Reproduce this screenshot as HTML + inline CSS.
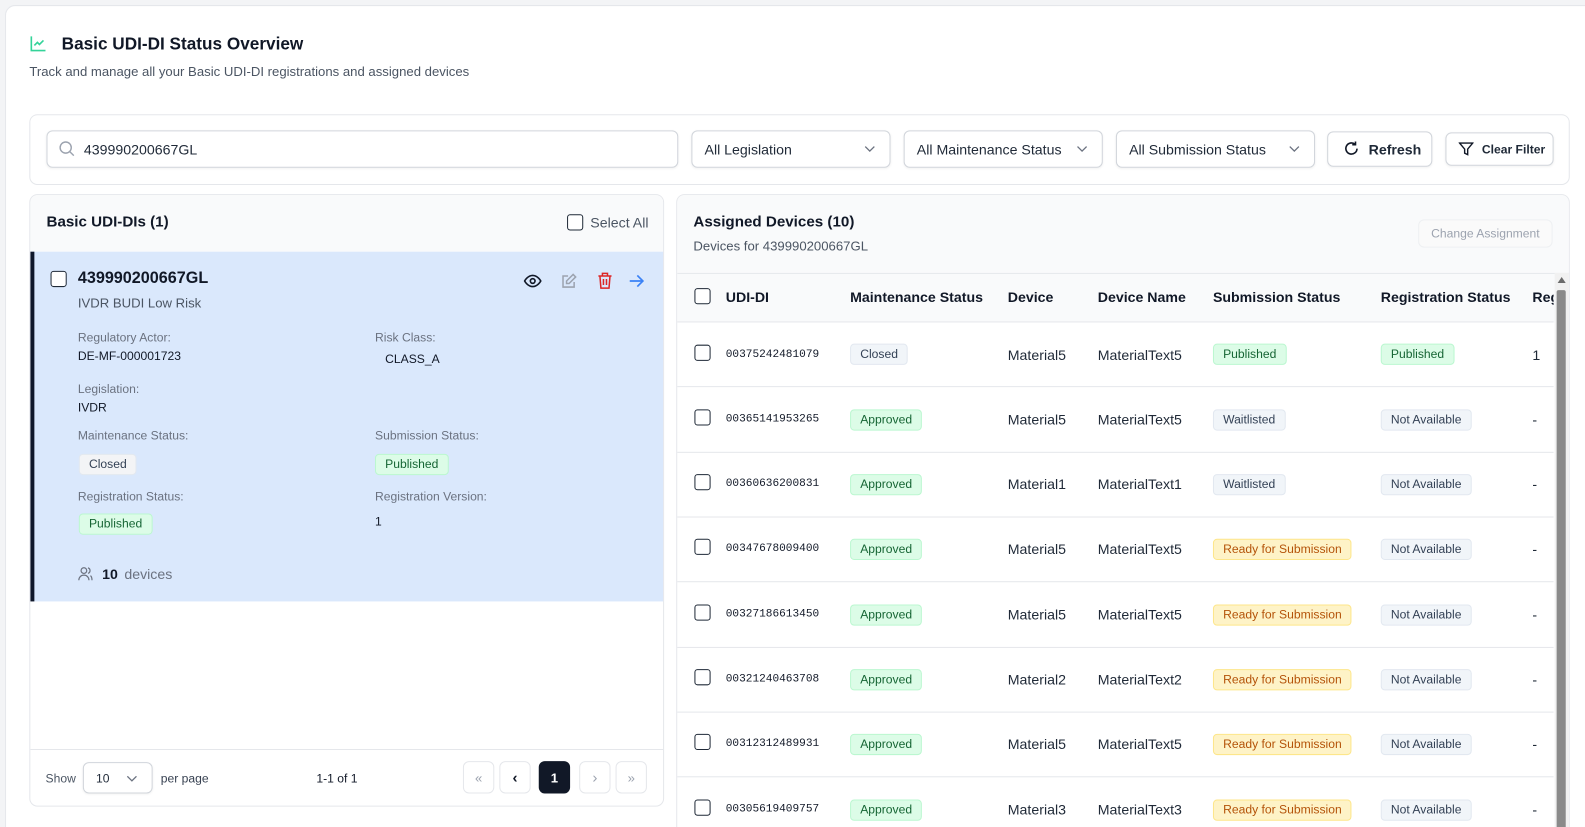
<!DOCTYPE html>
<html><head><meta charset="utf-8"><style>
*{box-sizing:border-box;margin:0;padding:0}
html,body{width:1585px;height:827px;overflow:hidden}
body{background:#f3f4f6;font-family:"Liberation Sans",sans-serif;color:#111827}
#clip{position:fixed;left:0;top:0;width:1585px;height:827px;overflow:hidden}
#w{position:absolute;left:0;top:0;width:1568px;height:818px;transform:scale(1.0108);transform-origin:0 0}
.a{position:absolute}
.card{position:absolute;left:5px;top:5px;width:1590px;height:840px;background:#fff;border-radius:10px;border:1px solid #e5e7eb}
.box{position:absolute;border:1px solid #e5e7eb;border-radius:8px;background:#fff}
.inp{position:absolute;border:1px solid #d1d5db;border-radius:6px;background:#fff;height:37px;font-size:14px;color:#1f2937;display:flex;align-items:center;padding-left:12px;box-shadow:0 1px 2px rgba(0,0,0,.05)}
.chev{position:absolute;right:14px;top:13px}
.cb{position:absolute;width:16px;height:16px;border:1.5px solid #1f2937;border-radius:3px;background:#fff}
.lbl{position:absolute;font-size:12px;color:#6b7280}
.val{position:absolute;font-size:12px;color:#111827}
.bd{position:absolute;height:21px;line-height:19px;font-size:12px;padding:0 9px;border-radius:4px;border:1px solid;white-space:nowrap}
.g{background:#dcfce7;border-color:#bbf7d0;color:#166534}
.s{background:#f1f5f9;border-color:#e2e8f0;color:#334155}
.y{background:#fef3c7;border-color:#fde68a;color:#b45309}
.th{position:absolute;top:286px;font-size:14px;font-weight:bold;color:#111827}
.td{position:absolute;font-size:14px;color:#1f2937}
.mono{font-family:"Liberation Mono",monospace;font-size:11px;color:#111827}
.line{position:absolute;left:670px;width:867px;height:1px;background:#e5e7eb}
.pg{position:absolute;top:753px;width:31px;height:32px;border:1px solid #e5e7eb;border-radius:6px;background:#fff;display:flex;align-items:center;justify-content:center;font-size:13px;color:#9ca3af}
</style></head><body><div id="clip"><div id="w">
<div class="card"></div>
<svg class="a" style="left:29px;top:34px" width="18" height="18" viewBox="0 0 18 18" fill="none" stroke="#34d399" stroke-width="1.6"><path d="M2 2v14h14"/><path d="M5 11l3-3 2 2 4-4"/></svg>
<div class="a" style="left:61px;top:34px;font-size:17px;font-weight:bold;color:#111827">Basic UDI-DI Status Overview</div>
<div class="a" style="left:29px;top:63px;font-size:13px;color:#4b5563">Track and manage all your Basic UDI-DI registrations and assigned devices</div>

<div class="box" style="left:29px;top:113px;width:1524px;height:70px"></div>
<div class="inp" style="left:46px;top:129px;width:625px;padding-left:36px">439990200667GL</div>
<svg class="a" style="left:58px;top:139px" width="17" height="17" viewBox="0 0 17 17" fill="none" stroke="#9ca3af" stroke-width="1.4"><circle cx="7" cy="7" r="5.5"/><path d="M11 11l4 4"/></svg>
<div class="inp" style="left:684px;top:129px;width:197px">All Legislation<svg class="chev" width="11" height="8" viewBox="0 0 11 8" fill="none" stroke="#6b7280" stroke-width="1.3"><path d="M1 2l4.5 4.5L10 2"/></svg></div>
<div class="inp" style="left:894px;top:129px;width:197px">All Maintenance Status<svg class="chev" width="11" height="8" viewBox="0 0 11 8" fill="none" stroke="#6b7280" stroke-width="1.3"><path d="M1 2l4.5 4.5L10 2"/></svg></div>
<div class="inp" style="left:1104px;top:129px;width:197px">All Submission Status<svg class="chev" width="11" height="8" viewBox="0 0 11 8" fill="none" stroke="#6b7280" stroke-width="1.3"><path d="M1 2l4.5 4.5L10 2"/></svg></div>
<div class="inp" style="left:1313px;top:130px;width:104px;height:35px;padding-left:40px;font-weight:bold">Refresh</div>
<svg class="a" style="left:1329px;top:139px" width="16" height="16" viewBox="0 0 16 16" fill="none" stroke="#111827" stroke-width="1.6"><path d="M13.5 8A5.5 5.5 0 1 1 11.5 3.7"/><path d="M12 1v3.2H8.8"/></svg>
<div class="inp" style="left:1430px;top:131px;width:107px;height:33px;padding-left:35px;font-size:12px;font-weight:bold">Clear Filter</div>
<svg class="a" style="left:1443px;top:140px" width="15" height="15" viewBox="0 0 15 15" fill="none" stroke="#111827" stroke-width="1.4"><path d="M1 1.5h13L9 7.5V13l-3-1.5v-4z"/></svg>

<div class="box" style="left:29px;top:192px;width:628px;height:606px;overflow:hidden">
<div class="a" style="left:0;top:0;width:628px;height:56px;background:#f9fafb"></div>
<div class="a" style="left:0;top:56px;width:628px;height:346px;background:#dae8fc;border-left:4px solid #0f172a"></div>
<div class="a" style="left:0;top:548px;width:628px;height:1px;background:#e5e7eb"></div>
</div>
<div class="a" style="left:46px;top:211px;font-size:15px;font-weight:bold">Basic UDI-DIs (1)</div>
<div class="cb" style="left:561px;top:212px"></div>
<div class="a" style="left:584px;top:212px;font-size:14px;color:#4b5563">Select All</div>
<div class="cb" style="left:50px;top:268px"></div>
<div class="a" style="left:77px;top:267px;font-size:16px;font-weight:bold">439990200667GL</div>
<div class="a" style="left:77px;top:292px;font-size:13px;color:#4b5563">IVDR BUDI Low Risk</div>
<svg class="a" style="left:518px;top:271px" width="18" height="14" viewBox="0 0 18 14" fill="none" stroke="#111827" stroke-width="1.6"><path d="M1 7s3-5.5 8-5.5S17 7 17 7s-3 5.5-8 5.5S1 7 1 7z"/><circle cx="9" cy="7" r="2.3"/></svg>
<svg class="a" style="left:555px;top:270px" width="16" height="16" viewBox="0 0 16 16" fill="none" stroke="#9ca3af" stroke-width="1.5"><path d="M13 9v5H2V3h5"/><path d="M12 1.5l2.5 2.5L8 10.5H5.5V8z"/></svg>
<svg class="a" style="left:591px;top:269px" width="15" height="17" viewBox="0 0 15 17" fill="none" stroke="#dc2626" stroke-width="1.5"><path d="M1 4h13M5 4V1.5h5V4M2.5 4l1 12h8l1-12M6 7v6M9 7v6"/></svg>
<svg class="a" style="left:622px;top:270px" width="16" height="16" viewBox="0 0 16 16" fill="none" stroke="#3b82f6" stroke-width="1.7"><path d="M1 8h13M8.5 2.5L14 8l-5.5 5.5"/></svg>
<div class="lbl" style="left:77px;top:327px">Regulatory Actor:</div>
<div class="val" style="left:77px;top:345px">DE-MF-000001723</div>
<div class="lbl" style="left:371px;top:327px">Risk Class:</div>
<div class="val" style="left:381px;top:348px">CLASS_A</div>
<div class="lbl" style="left:77px;top:378px">Legislation:</div>
<div class="val" style="left:77px;top:396px">IVDR</div>
<div class="lbl" style="left:77px;top:424px">Maintenance Status:</div>
<div class="lbl" style="left:371px;top:424px">Submission Status:</div>
<div class="bd s" style="left:78px;top:449px;background:#f3f4f6">Closed</div>
<div class="bd g" style="left:371px;top:449px">Published</div>
<div class="lbl" style="left:77px;top:484px">Registration Status:</div>
<div class="lbl" style="left:371px;top:484px">Registration Version:</div>
<div class="bd g" style="left:78px;top:508px">Published</div>
<div class="val" style="left:371px;top:509px">1</div>
<svg class="a" style="left:77px;top:560px" width="15" height="15" viewBox="0 0 15 15" fill="none" stroke="#6b7280" stroke-width="1.2"><circle cx="6" cy="4.5" r="2.8"/><path d="M1 14c0-3 2.2-5 5-5s5 2 5 5M10 1.8a2.8 2.8 0 0 1 0 5.4M12.5 9.5c1 .8 1.5 2.5 1.5 4.5"/></svg>
<div class="a" style="left:101px;top:560px;font-size:14px;font-weight:bold">10</div>
<div class="a" style="left:123px;top:560px;font-size:14px;color:#6b7280">devices</div>
<div class="a" style="left:45px;top:763px;font-size:12px;color:#4b5563">Show</div>
<div class="inp" style="left:82px;top:754px;width:69px;height:31px;font-size:12px">10<svg class="chev" style="top:11px" width="11" height="8" viewBox="0 0 11 8" fill="none" stroke="#6b7280" stroke-width="1.3"><path d="M1 2l4.5 4.5L10 2"/></svg></div>
<div class="a" style="left:159px;top:763px;font-size:12px;color:#374151">per page</div>
<div class="a" style="left:313px;top:763px;font-size:12px;color:#111827">1-1 of 1</div>
<div class="pg" style="left:458px">«</div>
<div class="pg" style="left:494px;color:#111827;font-weight:bold;font-size:15px">‹</div>
<div class="pg" style="left:533px;background:#111827;border-color:#111827;color:#fff;font-weight:bold">1</div>
<div class="pg" style="left:573px;font-size:15px">›</div>
<div class="pg" style="left:609px">»</div>

<div class="box" style="left:669px;top:192px;width:884px;height:650px;overflow:hidden">
<div class="a" style="left:0;top:0;width:884px;height:78px;background:#f9fafb;border-bottom:1px solid #e5e7eb"></div>
<div class="a" style="left:0;top:78px;width:868px;height:48px;background:#f9fafb"></div>
</div>
<div class="a" style="left:686px;top:211px;font-size:15px;font-weight:bold">Assigned Devices (10)</div>
<div class="a" style="left:686px;top:236px;font-size:13px;color:#4b5563">Devices for 439990200667GL</div>
<div class="a" style="left:1403px;top:217px;width:133px;height:28px;border:1px solid #eef0f2;border-radius:6px;background:#fafafa;font-size:12px;color:#9ca3af;text-align:center;line-height:26px">Change Assignment</div>
<div class="a" style="left:1538px;top:270px;width:14px;height:560px;background:#f1f1f1"></div>
<div class="a" style="left:1540px;top:287px;width:9px;height:545px;background:#8a8a8a;border-radius:2px"></div>
<div class="a" style="left:1541px;top:274px;width:0;height:0;border-left:4px solid transparent;border-right:4px solid transparent;border-bottom:6px solid #6b6b6b"></div>
<div class="cb" style="left:687px;top:285px"></div>
<div class="th" style="left:718px">UDI-DI</div>
<div class="th" style="left:841px">Maintenance Status</div>
<div class="th" style="left:997px">Device</div>
<div class="th" style="left:1086px">Device Name</div>
<div class="th" style="left:1200px">Submission Status</div>
<div class="th" style="left:1366px">Registration Status</div>
<div class="th" style="left:1516px;width:21px;overflow:hidden">Reg</div>
<div class="line" style="top:318px"></div>

<div class="cb" style="left:687px;top:341px"></div><div class="td mono" style="left:718px;top:345px">00375242481079</div><div class="bd s" style="left:841px;top:340px">Closed</div><div class="td" style="left:997px;top:343px">Material5</div><div class="td" style="left:1086px;top:343px">MaterialText5</div><div class="bd g" style="left:1200px;top:340px">Published</div><div class="bd g" style="left:1366px;top:340px">Published</div><div class="td" style="left:1516px;top:343px">1</div>
<div class="line" style="top:382px"></div>
<div class="cb" style="left:687px;top:405px"></div><div class="td mono" style="left:718px;top:409px">00365141953265</div><div class="bd g" style="left:841px;top:405px">Approved</div><div class="td" style="left:997px;top:407px">Material5</div><div class="td" style="left:1086px;top:407px">MaterialText5</div><div class="bd s" style="left:1200px;top:405px">Waitlisted</div><div class="bd s" style="left:1366px;top:405px">Not Available</div><div class="td" style="left:1516px;top:407px">-</div>
<div class="line" style="top:447px"></div>
<div class="cb" style="left:687px;top:469px"></div><div class="td mono" style="left:718px;top:473px">00360636200831</div><div class="bd g" style="left:841px;top:469px">Approved</div><div class="td" style="left:997px;top:471px">Material1</div><div class="td" style="left:1086px;top:471px">MaterialText1</div><div class="bd s" style="left:1200px;top:469px">Waitlisted</div><div class="bd s" style="left:1366px;top:469px">Not Available</div><div class="td" style="left:1516px;top:471px">-</div>
<div class="line" style="top:511px"></div>
<div class="cb" style="left:687px;top:533px"></div><div class="td mono" style="left:718px;top:537px">00347678009400</div><div class="bd g" style="left:841px;top:533px">Approved</div><div class="td" style="left:997px;top:535px">Material5</div><div class="td" style="left:1086px;top:535px">MaterialText5</div><div class="bd y" style="left:1200px;top:533px">Ready for Submission</div><div class="bd s" style="left:1366px;top:533px">Not Available</div><div class="td" style="left:1516px;top:535px">-</div>
<div class="line" style="top:575px"></div>
<div class="cb" style="left:687px;top:598px"></div><div class="td mono" style="left:718px;top:602px">00327186613450</div><div class="bd g" style="left:841px;top:598px">Approved</div><div class="td" style="left:997px;top:600px">Material5</div><div class="td" style="left:1086px;top:600px">MaterialText5</div><div class="bd y" style="left:1200px;top:598px">Ready for Submission</div><div class="bd s" style="left:1366px;top:598px">Not Available</div><div class="td" style="left:1516px;top:600px">-</div>
<div class="line" style="top:640px"></div>
<div class="cb" style="left:687px;top:662px"></div><div class="td mono" style="left:718px;top:666px">00321240463708</div><div class="bd g" style="left:841px;top:662px">Approved</div><div class="td" style="left:997px;top:664px">Material2</div><div class="td" style="left:1086px;top:664px">MaterialText2</div><div class="bd y" style="left:1200px;top:662px">Ready for Submission</div><div class="bd s" style="left:1366px;top:662px">Not Available</div><div class="td" style="left:1516px;top:664px">-</div>
<div class="line" style="top:704px"></div>
<div class="cb" style="left:687px;top:726px"></div><div class="td mono" style="left:718px;top:730px">00312312489931</div><div class="bd g" style="left:841px;top:726px">Approved</div><div class="td" style="left:997px;top:728px">Material5</div><div class="td" style="left:1086px;top:728px">MaterialText5</div><div class="bd y" style="left:1200px;top:726px">Ready for Submission</div><div class="bd s" style="left:1366px;top:726px">Not Available</div><div class="td" style="left:1516px;top:728px">-</div>
<div class="line" style="top:768px"></div>
<div class="cb" style="left:687px;top:791px"></div><div class="td mono" style="left:718px;top:795px">00305619409757</div><div class="bd g" style="left:841px;top:791px">Approved</div><div class="td" style="left:997px;top:793px">Material3</div><div class="td" style="left:1086px;top:793px">MaterialText3</div><div class="bd y" style="left:1200px;top:791px">Ready for Submission</div><div class="bd s" style="left:1366px;top:791px">Not Available</div><div class="td" style="left:1516px;top:793px">-</div>
</div></div></body></html>
